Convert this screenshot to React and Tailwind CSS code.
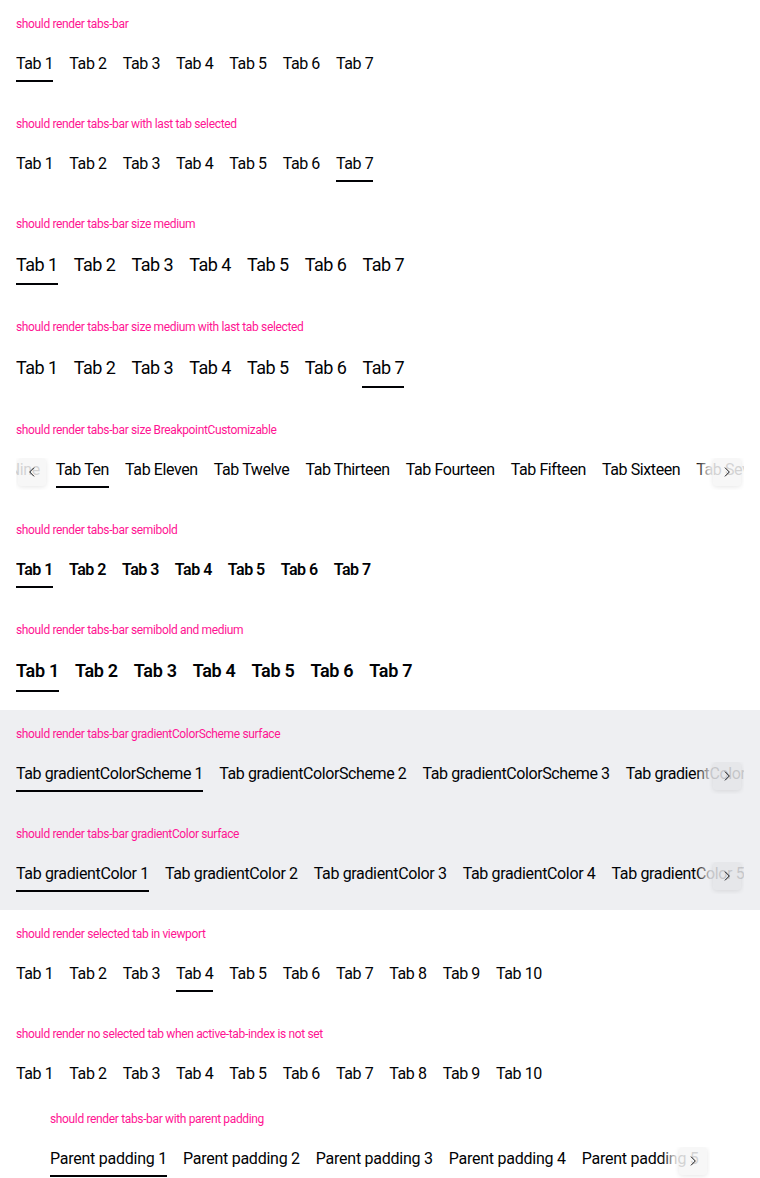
import React from "react";

const sizes = {
  small: "text-[16px] leading-6 tracking-[-0.4px] pb-1",
  small_mid: "text-[16px] leading-6 tracking-[-0.35px] pb-1",
  small_loose: "text-[16px] leading-6 tracking-[-0.25px] pb-1",
  medium: "text-[18px] leading-[26px] tracking-[-0.5px] pb-[5px]",
  small_semibold: "text-[16px] leading-6 tracking-[-0.5px] pb-1 font-semibold",
  medium_semibold: "text-[18px] leading-[26px] tracking-[-0.3px] pb-[6px] font-semibold",
};

function Chevron({ dir }) {
  return (
    <svg width="14" height="14" viewBox="0 0 24 24" fill="none" stroke="#010205" strokeWidth="1.6" strokeLinecap="round" strokeLinejoin="round">
      {dir === "left" ? <polyline points="15 5 8 12 15 19" /> : <polyline points="9 5 16 12 9 19" />}
    </svg>
  );
}

function ScrollBtn({ dir, gray }) {
  const fadeR = gray
    ? "bg-[linear-gradient(to_right,rgba(238,239,242,0)_0%,rgba(238,239,242,0.85)_30%,rgba(238,239,242,0.85)_100%)]"
    : "bg-[linear-gradient(to_right,rgba(255,255,255,0)_0%,rgba(255,255,255,0.85)_30%,rgba(255,255,255,0.85)_100%)]";
  const fadeL = gray
    ? "bg-[linear-gradient(to_left,rgba(238,239,242,0)_0%,rgba(238,239,242,0.85)_35%,rgba(238,239,242,0.85)_100%)]"
    : "bg-[linear-gradient(to_left,rgba(255,255,255,0)_0%,rgba(255,255,255,0.85)_35%,rgba(255,255,255,0.85)_100%)]";
  if (dir === "right") {
    return (
      <div className={`absolute right-0 top-0 h-7 w-[48px] flex justify-end pr-[3px] ${fadeR}`}>
        <div className="w-7 h-7 rounded-[4px] bg-[rgba(0,0,0,0.03)] shadow-[0_1px_5px_rgba(0,0,0,0.1)] flex items-center justify-center">
          <Chevron dir="right" />
        </div>
      </div>
    );
  }
  return (
    <div className={`absolute left-0 top-0 h-7 w-[40px] flex justify-start pl-[2px] ${fadeL}`}>
      <div className="w-7 h-7 rounded-[4px] bg-[rgba(0,0,0,0.03)] shadow-[0_1px_5px_rgba(0,0,0,0.1)] flex items-center justify-center">
        <Chevron dir="left" />
      </div>
    </div>
  );
}

function TabsBar({ items, selected, size = "small", left, right, gray, offset }) {
  return (
    <div className="relative overflow-hidden">
      <div className={`flex gap-4 whitespace-nowrap pb-[2px] ${offset ? "ml-[-36px]" : ""}`}>
        {items.map((t, i) => (
          <div
            key={i}
            className={`shrink-0 text-[#010205] border-b-2 ${sizes[size]} ${i === selected ? "border-[#010205]" : "border-transparent"}`}
          >
            {t}
          </div>
        ))}
      </div>
      {left && <ScrollBtn dir="left" gray={gray} />}
      {right && <ScrollBtn dir="right" gray={gray} />}
    </div>
  );
}

function Label({ children }) {
  return <p className="text-[12px] leading-4 tracking-[-0.35px] text-[#ff1493] mb-5">{children}</p>;
}

function Section({ label, gray, children }) {
  return (
    <div className={`p-4 ${gray ? "bg-[#eeeff2]" : ""}`}>
      <Label>{label}</Label>
      {children}
    </div>
  );
}

const seven = ["Tab 1", "Tab 2", "Tab 3", "Tab 4", "Tab 5", "Tab 6", "Tab 7"];
const ten = [...seven, "Tab 8", "Tab 9", "Tab 10"];
const words = ["Tab Nine", "Tab Ten", "Tab Eleven", "Tab Twelve", "Tab Thirteen", "Tab Fourteen", "Tab Fifteen", "Tab Sixteen", "Tab Seventeen", "Tab Eighteen"];
const gcs = [1, 2, 3, 4, 5].map((n) => `Tab gradientColorScheme ${n}`);
const gc = [1, 2, 3, 4, 5].map((n) => `Tab gradientColor ${n}`);
const pp = [1, 2, 3, 4, 5, 6].map((n) => `Parent padding ${n}`);

export default function App() {
  return (
    <div className="font-[Roboto,sans-serif] bg-white w-[760px] min-h-[1178px] overflow-hidden">
      <Section label="should render tabs-bar">
        <TabsBar items={seven} selected={0} />
      </Section>
      <Section label="should render tabs-bar with last tab selected">
        <TabsBar items={seven} selected={6} />
      </Section>
      <Section label="should render tabs-bar size medium">
        <TabsBar items={seven} selected={0} size="medium" />
      </Section>
      <Section label="should render tabs-bar size medium with last tab selected">
        <TabsBar items={seven} selected={6} size="medium" />
      </Section>
      <Section label="should render tabs-bar size BreakpointCustomizable">
        <TabsBar items={words} selected={1} left right offset />
      </Section>
      <Section label="should render tabs-bar semibold">
        <TabsBar items={seven} selected={0} size="small_semibold" />
      </Section>
      <Section label="should render tabs-bar semibold and medium">
        <TabsBar items={seven} selected={0} size="medium_semibold" />
      </Section>
      <Section label="should render tabs-bar gradientColorScheme surface" gray>
        <TabsBar items={gcs} selected={0} right gray />
      </Section>
      <Section label="should render tabs-bar gradientColor surface" gray>
        <TabsBar items={gc} selected={0} right gray size="small_mid" />
      </Section>
      <Section label="should render selected tab in viewport">
        <TabsBar items={ten} selected={3} />
      </Section>
      <Section label="should render no selected tab when active-tab-index is not set">
        <TabsBar items={ten} selected={-1} />
      </Section>
      <div className="pt-[1px] px-[50px]">
        <Label>should render tabs-bar with parent padding</Label>
        <TabsBar items={pp} selected={0} right size="small_loose" />
      </div>
    </div>
  );
}
